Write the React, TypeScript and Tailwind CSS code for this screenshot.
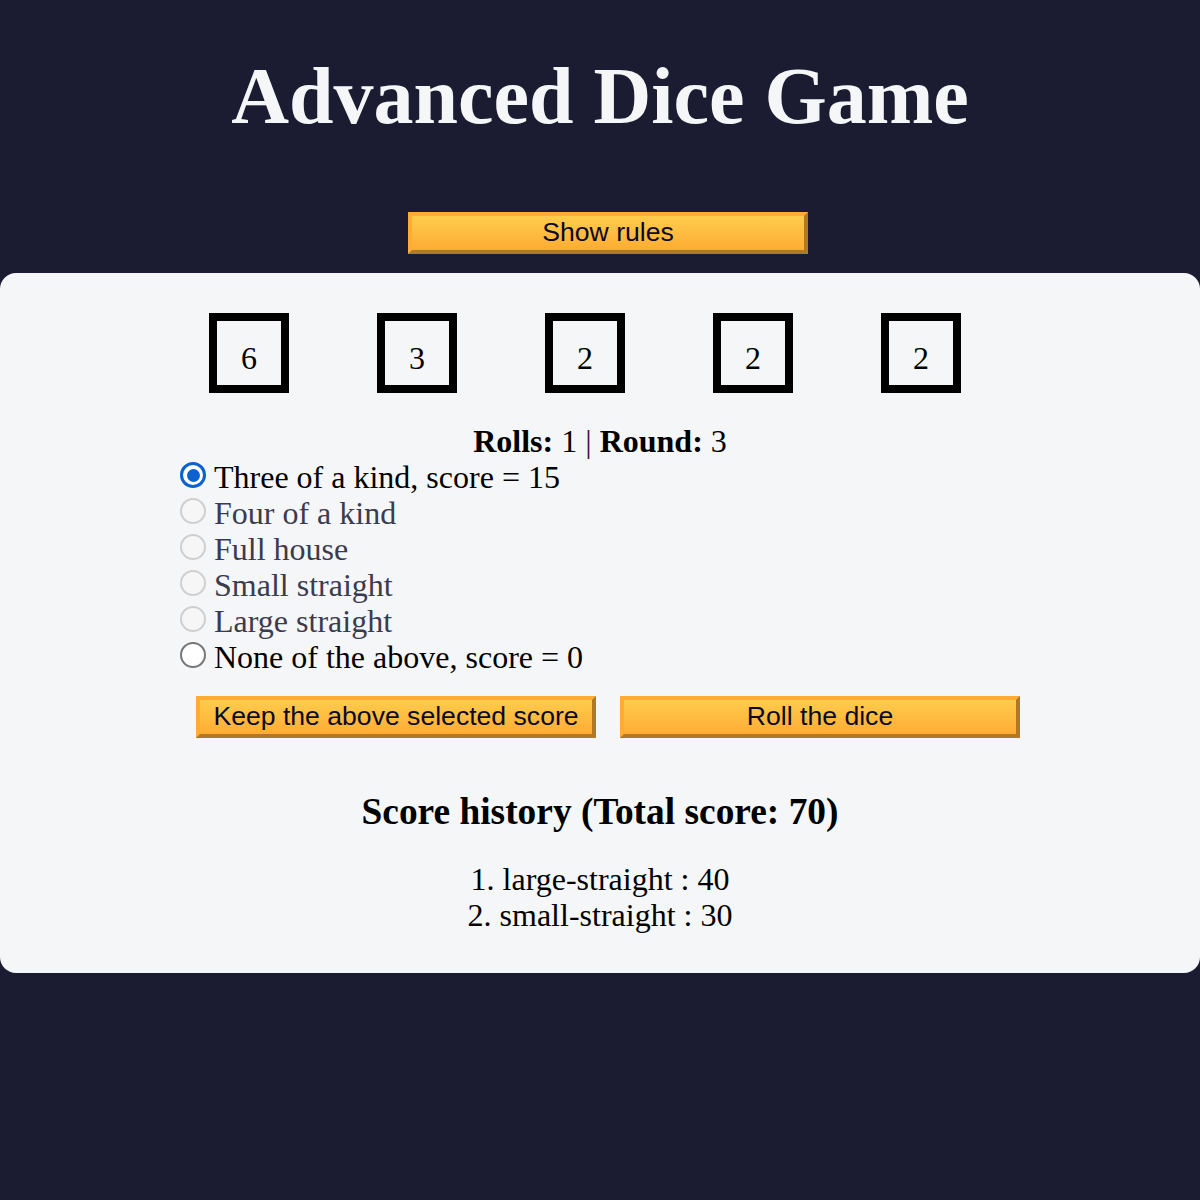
import React from "react";

const serif = { fontFamily: '"Liberation Serif", "Times New Roman", serif' };

function Btn({ children }: { children: React.ReactNode }) {
  return (
    <button
      className="w-[400px] h-[42px] flex items-center justify-center pb-[3px] border-[4px] border-t-[#feac32] border-l-[#feac32] border-b-[#b27823] border-r-[#b27823] bg-gradient-to-b from-[#fecc4c] to-[#ffac33] text-[#0a0a23] text-[26.6px] leading-[30px] cursor-pointer"
      style={{ fontFamily: '"Liberation Sans", Arial, sans-serif' }}
    >
      {children}
    </button>
  );
}

function Radio({ state }: { state: "checked" | "disabled" | "enabled" }) {
  if (state === "checked") {
    return (
      <span className="mt-[3px] w-[26px] h-[26px] shrink-0 rounded-full border-[3px] border-[#0b61cf] bg-white flex items-center justify-center">
        <span className="w-[13px] h-[13px] rounded-full bg-[#0b61cf]" />
      </span>
    );
  }
  if (state === "disabled") {
    return <span className="mt-[3px] w-[26px] h-[26px] shrink-0 rounded-full border-2 border-[#cfcfcf] bg-[#f6f6f6]" />;
  }
  return <span className="mt-[3px] w-[26px] h-[26px] shrink-0 rounded-full border-[2.5px] border-[#777777] bg-white" />;
}

export default function App() {
  const dice = [6, 3, 2, 2, 2];
  const options: { label: string; state: "checked" | "disabled" | "enabled" }[] = [
    { label: "Three of a kind, score = 15", state: "checked" },
    { label: "Four of a kind", state: "disabled" },
    { label: "Full house", state: "disabled" },
    { label: "Small straight", state: "disabled" },
    { label: "Large straight", state: "disabled" },
    { label: "None of the above, score = 0", state: "enabled" },
  ];
  return (
    <div className="w-full min-h-[1200px] bg-[#1b1b32]" style={serif}>
      <header className="pt-[50px] flex flex-col items-center">
        <h1 className="text-[80px] leading-[92px] font-bold text-[#f5f6f7] text-center">Advanced Dice Game</h1>
        <div className="mt-[70px] w-full flex justify-center pl-[16px]">
          <Btn>Show rules</Btn>
        </div>
      </header>
      <main className="mt-[19px] bg-[#f5f6f7] rounded-[16px] pt-[40px] pb-[40px] text-black">
        <div className="flex justify-center gap-[88px] pr-[30px]">
          {dice.map((d, i) => (
            <div
              key={i}
              className="w-[80px] h-[80px] border-[8px] border-black text-center pt-[19px] text-[32px] leading-[36px]"
            >
              {d}
            </div>
          ))}
        </div>
        <p className="mt-[30px] text-center text-[32px] leading-[36px]">
          <strong>Rolls:</strong> 1 <span className="text-[#4a1236]">|</span> <strong>Round:</strong> 3
        </p>
        <div className="pl-[180px] flex flex-col">
          {options.map((o, i) => (
            <div key={i} className="flex items-start gap-[8px] h-[36px]">
              <Radio state={o.state} />
              <span
                className={
                  "text-[32px] leading-[36px] " + (o.state === "disabled" ? "text-[#3b3b4f]" : "text-black")
                }
              >
                {o.label}
              </span>
            </div>
          ))}
        </div>
        <div className="mt-[21px] flex gap-[24px] pl-[196px]">
          <Btn>Keep the above selected score</Btn>
          <Btn>Roll the dice</Btn>
        </div>
        <h2 className="mt-[53px] text-center font-bold text-[37.4px] leading-[42px]">Score history (Total score: 70)</h2>
        <ol className="mt-[28px] text-center text-[32px] leading-[36px]">
          <li>1. large-straight : 40</li>
          <li>2. small-straight : 30</li>
        </ol>
      </main>
    </div>
  );
}
